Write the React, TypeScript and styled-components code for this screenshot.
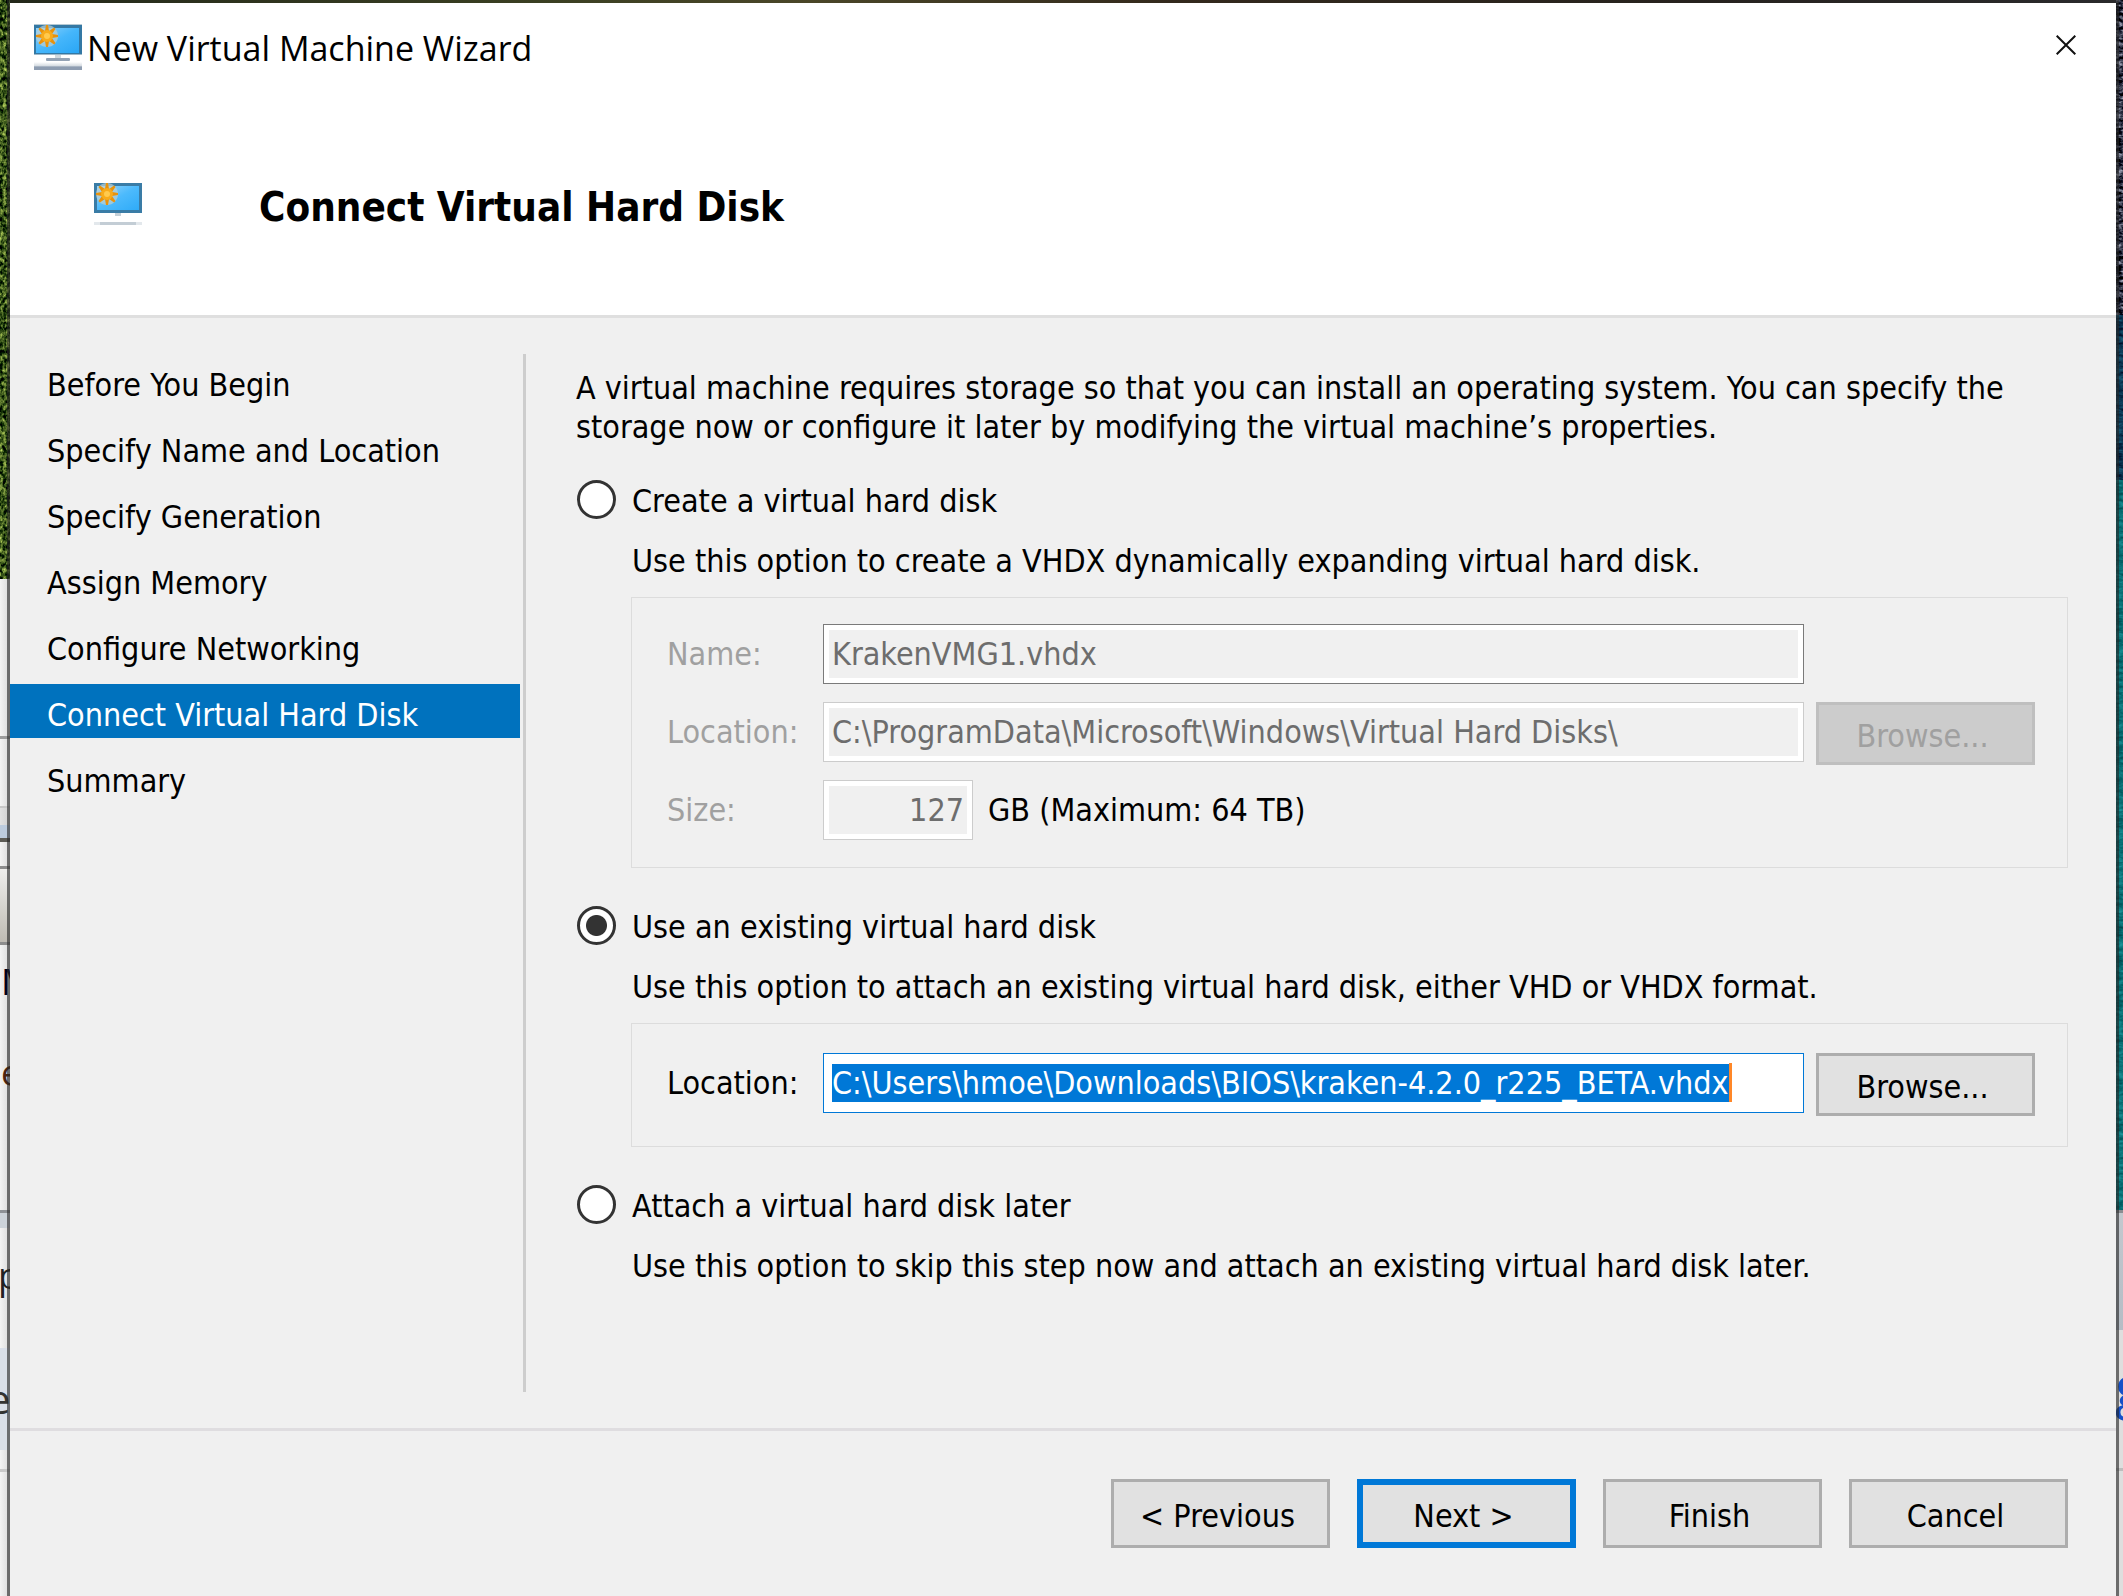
import React, { useLayoutEffect, useRef, useState } from 'react';
import styled, { createGlobalStyle } from 'styled-components';

const UI_FONT = '"DejaVu Sans Condensed", "DejaVu Sans", sans-serif';
const TITLE_FONT = '"Open Sans", "Noto Sans", sans-serif';

const GlobalStyle = createGlobalStyle`
  *, *::before, *::after { box-sizing: border-box; }
  body { margin: 0; background: #f0f0f0; }
`;

/* ---------- desktop behind the dialog ---------- */

const Desktop = styled.div`
  display: grid;
  grid-template-columns: 10px minmax(0, 1fr) 7px;
  grid-template-rows: 3px minmax(0, 1fr);
  min-height: 100vh;
  font-family: ${UI_FONT};
  font-size: 32px;
  line-height: 42px;
  color: #000;
`;

const TopEdge = styled.div`
  grid-column: 2;
  grid-row: 1;
  background: linear-gradient(90deg, #23281a, #3a3f22 25%, #4a4628 38%, #33291c 55%, #26221e 80%, #2a2a2c);
`;

const SideEdge = styled.div<{ $side: 'left' | 'right' }>`
  grid-column: ${(p) => (p.$side === 'left' ? 1 : 3)};
  grid-row: 1 / 3;
  position: relative;
  display: flex;
  flex-direction: column;
  overflow: hidden;

  &::after {
    content: '';
    position: absolute;
    top: 0;
    bottom: 0;
    ${(p) => (p.$side === 'left' ? 'right: 0;' : 'left: 0;')}
    width: 3px;
    background: rgba(38, 38, 38, 0.62);
  }
`;

const Slice = styled.div<{ $height: number; $fill: string; $last?: boolean }>`
  position: relative;
  flex: ${(p) => (p.$last ? '1 0 auto' : '0 0 auto')};
  height: ${(p) => p.$height}px;
  background: ${(p) => p.$fill};
  overflow: hidden;
`;

const Fragment = styled.span<{ $top: number; $left: number; $size: number; $color: string }>`
  position: absolute;
  top: ${(p) => p.$top}px;
  left: ${(p) => p.$left}px;
  font-family: ${TITLE_FONT};
  font-size: ${(p) => p.$size}px;
  line-height: 1;
  color: ${(p) => p.$color};
`;

const Texture = styled.svg`
  display: block;
  width: 100%;
  height: 100%;
`;

type SliceData = {
  height: number;
  fill: string;
  text?: { value: string; top: number; left: number; size: number; color: string };
};

const PAPER = 'linear-gradient(90deg, #f4f4f4, #d9d9d9)';

const leftSlices: SliceData[] = [
  { height: 157, fill: PAPER },
  { height: 3, fill: '#9c9c9c' },
  { height: 67, fill: PAPER },
  { height: 2, fill: '#c8c8c8' },
  { height: 17, fill: 'linear-gradient(90deg, #e2e2e2, #cfcfcf)' },
  { height: 13, fill: '#bccbdd' },
  { height: 4, fill: '#5c5b55' },
  { height: 24, fill: PAPER },
  { height: 3, fill: '#8d8d8d' },
  { height: 73, fill: 'linear-gradient(180deg, #efeeec, #bfbbb3)' },
  { height: 3, fill: '#8d8d8d' },
  { height: 90, fill: PAPER, text: { value: 'M', top: 19, left: 1, size: 36, color: '#000018' } },
  { height: 175, fill: PAPER, text: { value: 'e', top: 20, left: 1, size: 36, color: '#4a2410' } },
  { height: 3, fill: '#8d9196' },
  { height: 15, fill: '#ccd3da' },
  { height: 120, fill: PAPER, text: { value: 'p', top: 30, left: -2, size: 36, color: '#222' } },
  { height: 102, fill: '#d9dfe9', text: { value: 'e', top: 31, left: -12, size: 40, color: '#333' } },
  { height: 19, fill: PAPER },
  { height: 3, fill: '#c9c9c9' },
  { height: 10, fill: PAPER },
];

const rightSlices: SliceData[] = [
  { height: 3, fill: '#8a8d91' },
  { height: 117, fill: 'linear-gradient(180deg, #c3c8ce, #b4bcc5)' },
  { height: 138, fill: '#dedede', text: { value: 'g', top: 27, left: -1, size: 56, color: '#1450c8' } },
  { height: 3, fill: '#bdbdbd' },
  { height: 10, fill: '#dedede' },
];

function Slices({ items }: { items: SliceData[] }) {
  return (
    <>
      {items.map((s, i) => (
        <Slice key={i} $height={s.height} $fill={s.fill} $last={i === items.length - 1}>
          {s.text && (
            <Fragment $top={s.text.top} $left={s.text.left} $size={s.text.size} $color={s.text.color}>
              {s.text.value}
            </Fragment>
          )}
        </Slice>
      ))}
    </>
  );
}

function Noise({ id, frequency, tint }: { id: string; frequency: string; tint: string }) {
  return (
    <Texture>
      <filter id={id} x="0" y="0" width="100%" height="100%" colorInterpolationFilters="sRGB">
        <feTurbulence type="fractalNoise" baseFrequency={frequency} numOctaves="3" seed="4" />
        <feColorMatrix values={tint} />
      </filter>
      <rect width="100%" height="100%" filter={`url(#${id})`} />
    </Texture>
  );
}

/* ---------- dialog ---------- */

const Dialog = styled.main`
  grid-column: 2;
  grid-row: 2;
  display: flex;
  flex-direction: column;
  background: #f0f0f0;
`;

const Header = styled.header`
  background: #fff;
  border-bottom: 3px solid #dfdfdf;
`;

const TitleBar = styled.div`
  display: flex;
  align-items: flex-start;
  padding: 21px 40px 0 24px;
`;

const WindowTitle = styled.h1`
  flex: 1;
  margin: 0 0 0 5px;
  font: 400 34px/48px ${TITLE_FONT};
`;

const CloseButton = styled.button`
  display: flex;
  margin-top: 11px;
  padding: 0;
  border: 0;
  background: none;
`;

const Banner = styled.div`
  display: flex;
  align-items: flex-start;
  padding: 111px 84px 84px;
`;

const PageTitle = styled.h2`
  margin: 0 0 0 117px;
  font: 700 40px/48px ${UI_FONT};
`;

const Body = styled.div`
  flex: 1;
  display: flex;
`;

const Steps = styled.nav`
  flex: 0 0 516px;
  display: flex;
  flex-direction: column;
  gap: 12px;
  margin: 36px 0;
  padding-right: 3px;
  border-right: 3px solid #cdcdcd;
`;

const Step = styled.a<{ $current?: boolean }>`
  height: 54px;
  padding: 8px 0 0 37px;
  line-height: 46px;
  text-decoration: none;
  color: ${(p) => (p.$current ? '#fff' : '#000')};
  background: ${(p) => (p.$current ? '#0072be' : 'transparent')};
`;

const Content = styled.form`
  flex: 1;
  min-width: 0;
  padding: 51px 48px 48px 50px;
`;

const Intro = styled.p`
  margin: 0 0 33px;
  line-height: 39px;
`;

const Option = styled.section`
  margin-bottom: 38px;
`;

const OptionHead = styled.div`
  display: flex;
  gap: 16px;
`;

const Radio = styled.input`
  appearance: none;
  flex: none;
  width: 39px;
  height: 39px;
  margin: 0 0 0 1px;
  border: 3px solid #333;
  border-radius: 50%;
  background: #fff;

  &:checked {
    background: radial-gradient(circle, #333 10px, #fff 11px);
  }
`;

const Hint = styled.p`
  margin: 18px 0 15px 56px;
`;

const Group = styled.div<{ $roomy?: boolean }>`
  display: grid;
  grid-template-columns: 144px minmax(0, 1fr) 219px;
  grid-auto-rows: 60px;
  gap: 18px 12px;
  margin-left: 55px;
  padding: ${(p) => (p.$roomy ? '29px 32px 33px 35px' : '26px 32px 27px 35px')};
  border: 1px solid #dcdcdc;
`;

const FieldLabel = styled.label<{ $dim?: boolean }>`
  grid-column: 1;
  line-height: 60px;
  color: ${(p) => (p.$dim ? '#a0a0a0' : '#000')};
`;

const TextField = styled.input<{ $narrow?: boolean; $strong?: boolean }>`
  width: ${(p) => (p.$narrow ? '150px' : '100%')};
  height: 60px;
  padding: 0 8px;
  border: 1px solid #0078d7;
  border-radius: 0;
  outline: 0;
  background: #fff;
  font: 32px/39px ${UI_FONT};
  color: #000;
  text-align: ${(p) => (p.$narrow ? 'right' : 'left')};

  &:disabled {
    border-color: ${(p) => (p.$strong ? '#7a7a7a' : '#cccccc')};
    background: #f0f0f0;
    box-shadow: inset 0 0 0 5px #fff;
    color: #6d6d6d;
  }

  &::selection {
    background: #0078d7;
    color: #fff;
  }
`;

const SizeField = styled.div`
  grid-column: 2 / 4;
  display: flex;
  gap: 15px;
  line-height: 60px;
`;

const PathField = styled.div`
  position: relative;
`;

const Caret = styled.span`
  position: absolute;
  top: 10px;
  width: 3px;
  height: 39px;
  background: #ff8728;
`;

const Button = styled.button<{ $tall?: boolean; $primary?: boolean }>`
  width: 219px;
  height: ${(p) => (p.$tall ? 69 : 63)}px;
  padding: 5px 6px 0 0;
  border: ${(p) => (p.$primary ? '6px solid #0078d7' : '3px solid #adadad')};
  border-radius: 0;
  background: #e1e1e1;
  font: 32px/39px ${UI_FONT};
  color: #000;

  &:disabled {
    border-color: #bfbfbf;
    background: #cccccc;
    color: #a0a0a0;
  }
`;

const Footer = styled.footer`
  display: flex;
  justify-content: flex-end;
  gap: 27px;
  padding: 48px;
  border-top: 3px solid #dfdde0;
`;

/* ---------- icons ---------- */

const SUN_RAYS = [0, 45, 90, 135, 180, 225, 270, 315];

function Sun({ cx, cy }: { cx: number; cy: number }) {
  return (
    <g>
      <circle cx={cx} cy={cy} r="11" fill="#bcd0d3" opacity="0.7" />
      {SUN_RAYS.map((a) => (
        <path
          key={a}
          d={`M${cx - 2} ${cy - 5} L${cx - 1} ${cy - 11} L${cx + 1} ${cy - 11} L${cx + 2} ${cy - 5} Z`}
          fill="#e8920c"
          transform={`rotate(${a} ${cx} ${cy})`}
        />
      ))}
      <circle cx={cx} cy={cy} r="6" fill="#f7ab1c" />
      <circle cx={cx} cy={cy} r="3" fill="#ffca4e" />
    </g>
  );
}

function TitleIcon() {
  return (
    <svg width="48" height="46" viewBox="0 0 48 46" aria-hidden="true">
      <defs>
        <linearGradient id="screenA" x1="0" y1="0" x2="1" y2="1">
          <stop offset="0" stopColor="#8fd2fb" />
          <stop offset="0.5" stopColor="#45b6fb" />
          <stop offset="1" stopColor="#2aa6f5" />
        </linearGradient>
        <linearGradient id="base" x1="0" y1="0" x2="0" y2="1">
          <stop offset="0" stopColor="#ffffff" />
          <stop offset="0.5" stopColor="#d3dae0" />
          <stop offset="0.6" stopColor="#8e9db1" />
          <stop offset="1" stopColor="#8e9db1" />
        </linearGradient>
      </defs>
      <rect width="48" height="2" fill="#b4c9d4" />
      <rect y="1" width="48" height="30" fill="#3478a4" />
      <rect x="2" y="4" width="43" height="25" fill="url(#screenA)" />
      <rect y="30" width="48" height="1" fill="#9db8c9" />
      <rect x="21" y="31" width="6" height="3" fill="#cfd8de" />
      <rect x="12" y="34" width="24" height="3" rx="1" fill="#94a3b5" />
      <rect y="38" width="48" height="8" fill="url(#base)" />
      <Sun cx={13} cy={12} />
    </svg>
  );
}

function BannerIcon() {
  return (
    <svg width="48" height="42" viewBox="0 0 48 42" aria-hidden="true">
      <defs>
        <linearGradient id="screenB" x1="0" y1="0" x2="1" y2="1">
          <stop offset="0" stopColor="#9ad6fb" />
          <stop offset="0.5" stopColor="#4cbafc" />
          <stop offset="1" stopColor="#2fabf8" />
        </linearGradient>
      </defs>
      <rect width="48" height="30" fill="#3a7ca6" />
      <rect x="3" y="3" width="42" height="24" fill="url(#screenB)" />
      <rect x="21" y="30" width="6" height="3" fill="#c5d0d8" />
      <rect y="39" width="48" height="3" fill="#e3e8ec" />
      <rect x="6" y="39" width="36" height="3" fill="#c3cdd5" />
      <Sun cx={13} cy={11} />
    </svg>
  );
}

function CloseIcon() {
  return (
    <svg width="20" height="20" viewBox="0 0 20 20" aria-hidden="true">
      <path d="M0.7 0.7 L19.3 19.3 M19.3 0.7 L0.7 19.3" stroke="#111" strokeWidth="2" fill="none" />
    </svg>
  );
}

/* ---------- page ---------- */

const STEPS = [
  'Before You Begin',
  'Specify Name and Location',
  'Specify Generation',
  'Assign Memory',
  'Configure Networking',
  'Connect Virtual Hard Disk',
  'Summary',
];
const CURRENT_STEP = 'Connect Virtual Hard Disk';
const DISK_PATH = 'C:\\Users\\hmoe\\Downloads\\BIOS\\kraken-4.2.0_r225_BETA.vhdx';
const FIELD_INSET = 9;

function SelectedPath({ id }: { id: string }) {
  const input = useRef<HTMLInputElement>(null);
  const [caretX, setCaretX] = useState<number | null>(null);

  useLayoutEffect(() => {
    const el = input.current;
    if (!el) return;
    el.focus();
    el.select();
    const ctx = document.createElement('canvas').getContext('2d');
    if (!ctx) return;
    ctx.font = `32px ${UI_FONT}`;
    setCaretX(FIELD_INSET + Math.round(ctx.measureText(el.value).width));
  }, []);

  return (
    <PathField>
      <TextField id={id} ref={input} type="text" defaultValue={DISK_PATH} spellCheck={false} />
      {caretX !== null && <Caret style={{ left: caretX }} />}
    </PathField>
  );
}

export default function App() {
  return (
    <>
      <GlobalStyle />
      <Desktop>
        <SideEdge $side="left" aria-hidden="true">
          <Slice $height={579} $fill="#2c3a14">
            <Noise
              id="grass"
              frequency="0.3 0.22"
              tint="1.5 0 0 0 -0.53  1.5 0 0 0 -0.42  0.8 0 0 0 -0.3  0 0 0 0 1"
            />
          </Slice>
          <Slices items={leftSlices} />
        </SideEdge>
        <TopEdge />
        <SideEdge $side="right" aria-hidden="true">
          <Slice $height={315} $fill="#26303c">
            <Noise
              id="dusk"
              frequency="0.15 0.3"
              tint="1.6 0 0 0 -0.62  1.6 0 0 0 -0.6  1.6 0 0 0 -0.53  0 0 0 0 1"
            />
          </Slice>
          <Slice $height={165} $fill="#0b3a58">
            <Noise
              id="deep"
              frequency="0.12 0.3"
              tint="0.2 0 0 0 -0.06  0.5 0 0 0 -0.03  0.5 0 0 0 0.08  0 0 0 0 1"
            />
          </Slice>
          <Slice $height={730} $fill="#087078">
            <Noise
              id="teal"
              frequency="0.12 0.3"
              tint="0.2 0 0 0 -0.07  0.4 0 0 0 0.24  0.4 0 0 0 0.26  0 0 0 0 1"
            />
          </Slice>
          <Slices items={rightSlices} />
        </SideEdge>

        <Dialog>
          <Header>
            <TitleBar>
              <TitleIcon />
              <WindowTitle>New Virtual Machine Wizard</WindowTitle>
              <CloseButton type="button" aria-label="Close">
                <CloseIcon />
              </CloseButton>
            </TitleBar>
            <Banner>
              <BannerIcon />
              <PageTitle>Connect Virtual Hard Disk</PageTitle>
            </Banner>
          </Header>

          <Body>
            <Steps>
              {STEPS.map((s) => (
                <Step key={s} href="#" $current={s === CURRENT_STEP}>
                  {s}
                </Step>
              ))}
            </Steps>

            <Content>
              <Intro>
                A virtual machine requires storage so that you can install an operating system. You can specify the
                storage now or configure it later by modifying the virtual machine’s properties.
              </Intro>

              <Option>
                <OptionHead>
                  <Radio type="radio" name="disk" id="create" />
                  <label htmlFor="create">Create a virtual hard disk</label>
                </OptionHead>
                <Hint>Use this option to create a VHDX dynamically expanding virtual hard disk.</Hint>
                <Group>
                  <FieldLabel htmlFor="name" $dim>Name:</FieldLabel>
                  <TextField id="name" type="text" defaultValue="KrakenVMG1.vhdx" disabled $strong />
                  <FieldLabel htmlFor="folder" $dim>Location:</FieldLabel>
                  <TextField
                    id="folder"
                    type="text"
                    defaultValue={'C:\\ProgramData\\Microsoft\\Windows\\Virtual Hard Disks\\'}
                    disabled
                  />
                  <Button type="button" disabled>Browse...</Button>
                  <FieldLabel htmlFor="size" $dim>Size:</FieldLabel>
                  <SizeField>
                    <TextField id="size" type="text" defaultValue="127" disabled $narrow />
                    <span>GB (Maximum: 64 TB)</span>
                  </SizeField>
                </Group>
              </Option>

              <Option>
                <OptionHead>
                  <Radio type="radio" name="disk" id="existing" defaultChecked />
                  <label htmlFor="existing">Use an existing virtual hard disk</label>
                </OptionHead>
                <Hint>Use this option to attach an existing virtual hard disk, either VHD or VHDX format.</Hint>
                <Group $roomy>
                  <FieldLabel htmlFor="path">Location:</FieldLabel>
                  <SelectedPath id="path" />
                  <Button type="button">Browse...</Button>
                </Group>
              </Option>

              <Option>
                <OptionHead>
                  <Radio type="radio" name="disk" id="later" />
                  <label htmlFor="later">Attach a virtual hard disk later</label>
                </OptionHead>
                <Hint>Use this option to skip this step now and attach an existing virtual hard disk later.</Hint>
              </Option>
            </Content>
          </Body>

          <Footer>
            <Button type="button" $tall>&lt; Previous</Button>
            <Button type="button" $tall $primary>Next &gt;</Button>
            <Button type="button" $tall>Finish</Button>
            <Button type="button" $tall>Cancel</Button>
          </Footer>
        </Dialog>
      </Desktop>
    </>
  );
}
